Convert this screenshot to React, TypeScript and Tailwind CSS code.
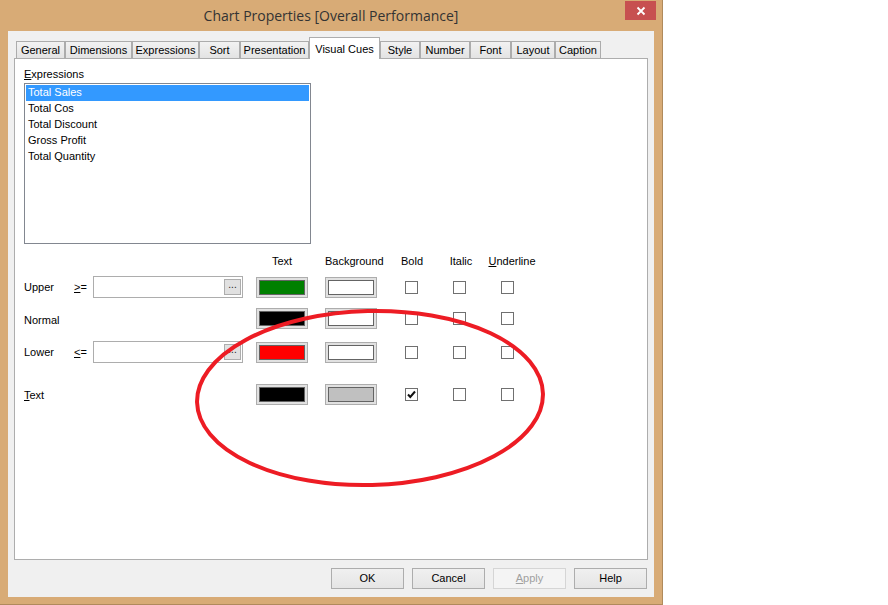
const tabs = [
  { label: 'General', w: 'w-[49px]' },
  { label: 'Dimensions', w: 'w-[67px]' },
  { label: 'Expressions', w: 'w-[67px]' },
  { label: 'Sort', w: 'w-[41px]' },
  { label: 'Presentation', w: 'w-[69px]' },
  { label: 'Visual Cues', w: 'w-[71px]', active: true },
  { label: 'Style', w: 'w-[40px]' },
  { label: 'Number', w: 'w-[50px]' },
  { label: 'Font', w: 'w-[41px]' },
  { label: 'Layout', w: 'w-[44px]' },
  { label: 'Caption', w: 'w-[46px]' },
];

const expressions = ['Total Sales', 'Total Cos', 'Total Discount', 'Gross Profit', 'Total Quantity'];

function Swatch({ color }: { color: string }) {
  return (
    <div className="h-[21px] w-[52px] border border-[#adadad] bg-[#e1e1e1] p-[2px]">
      <div className={`h-full w-full border border-[#646464] ${color}`} />
    </div>
  );
}

function Check({ checked = false }: { checked?: boolean }) {
  return (
    <div className="flex h-[13px] w-[13px] items-center justify-center border border-[#707070] bg-white">
      {checked && (
        <svg width="11" height="11" viewBox="0 0 11 11">
          <path d="M2 5.5 L4.3 8 L9 2.5" fill="none" stroke="#111" strokeWidth="2" />
        </svg>
      )}
    </div>
  );
}

function ValueBox() {
  return (
    <div className="flex h-[22px] w-[150px] items-center justify-end border border-[#adadad] bg-white pr-[1px]">
      <div className="flex h-[16px] w-[17px] items-center justify-center border border-[#adadad] bg-[#e1e1e1] pb-[4px] text-[10px] leading-none text-[#222]">
        ...
      </div>
    </div>
  );
}

function CueRow({
  label,
  op,
  hasBox,
  textColor,
  bgColor,
  bold,
  className,
  labelClass,
}: {
  label: React.ReactNode;
  op?: React.ReactNode;
  hasBox?: boolean;
  textColor: string;
  bgColor: string;
  bold?: boolean;
  className?: string;
  labelClass?: string;
}) {
  return (
    <div className={`flex h-[22px] items-center ${className ?? ''}`}>
      <span className={`w-[50px] ${labelClass ?? ''}`}>{label}</span>
      <span className="w-[19px]">{op}</span>
      <div className="w-[150px]">{hasBox && <ValueBox />}</div>
      <div className="ml-[13px]">
        <Swatch color={textColor} />
      </div>
      <div className="ml-[17px]">
        <Swatch color={bgColor} />
      </div>
      <div className="ml-[28px]">
        <Check checked={bold} />
      </div>
      <div className="ml-[35px]">
        <Check />
      </div>
      <div className="ml-[35px]">
        <Check />
      </div>
    </div>
  );
}

function Btn({ children, disabled }: { children: React.ReactNode; disabled?: boolean }) {
  return (
    <button
      type="button"
      className={
        disabled
          ? 'h-[21px] w-[73px] border border-[#d5d5d5] bg-[#f4f4f4] text-[11px] text-[#a0a0a0]'
          : 'h-[21px] w-[73px] border border-[#adadad] bg-gradient-to-b from-[#f0f0f0] to-[#e5e5e5] text-[11px] text-black'
      }
    >
      {children}
    </button>
  );
}

export default function App() {
  return (
    <div className="relative h-[605px] w-[888px] bg-white font-['Liberation_Sans',Arial,sans-serif] text-[11px] text-black">
      <div className="flex h-[605px] w-[663px] flex-col border-r border-b border-[#b08a5c] bg-[#d8ab76]">
        <div className="relative flex h-[31px] items-center justify-center">
          <span className="pb-[1px] font-['Open_Sans',sans-serif] text-[14px] text-[#333]">
            Chart Properties [Overall Performance]
          </span>
          <div className="absolute top-[1px] right-[6px] flex h-[19px] w-[31px] items-center justify-center bg-[#c75050]">
            <svg width="10" height="10" viewBox="0 0 10 10">
              <path d="M1.5 1.5 L8.5 8.5 M8.5 1.5 L1.5 8.5" stroke="white" strokeWidth="1.8" />
            </svg>
          </div>
        </div>

        <div className="mx-[8px] mb-[7px] flex flex-1 flex-col bg-[#f0f0f0] pt-[6px]">
          <div className="ml-[8px] flex h-[21px] items-end">
            {tabs.map((t) =>
              t.active ? (
                <div
                  key={t.label}
                  className={`${t.w} relative z-10 -mb-px flex h-[22px] items-start justify-center border border-b-0 border-[#adadad] bg-white pt-[3px]`}
                >
                  {t.label}
                </div>
              ) : (
                <div
                  key={t.label}
                  className={`${t.w} flex h-[17px] items-center justify-center border border-b-0 border-[#acacac] bg-gradient-to-b from-[#f2f2f2] to-[#e3e3e3] pt-[1px]`}
                >
                  {t.label}
                </div>
              ),
            )}
          </div>

          <div className="ml-[6px] h-[502px] w-[634px] border border-[#adadad] bg-white pt-[8px] pl-[9px]">
            <div className="h-[14px] leading-[14px]">
              <span className="underline">E</span>xpressions
            </div>
            <div className="mt-[2px] h-[161px] w-[287px] border border-[#828790] p-[1px]">
              {expressions.map((e, i) => (
                <div
                  key={e}
                  className={`h-[16px] pl-[2px] leading-[15px] ${i === 0 ? 'bg-[#3399ff] text-white' : ''}`}
                >
                  {e}
                </div>
              ))}
            </div>

            <div className="mt-[10px] flex h-[14px] items-center leading-[14px]">
              <span className="ml-[232px] w-[52px] text-center">Text</span>
              <span className="ml-[17px] w-[54px] text-center">Background</span>
              <span className="ml-[18px] w-[30px] text-center">Bold</span>
              <span className="ml-[19px] w-[30px] text-center">Italic</span>
              <span className="ml-[11px] w-[50px] text-center">
                <span className="underline">U</span>nderline
              </span>
            </div>

            <CueRow
              className="mt-[8px]"
              label="Upper"
              op={<><span className="underline">&gt;</span>=</>}
              hasBox
              textColor="bg-[#008000]"
              bgColor="bg-white"
            />
            <CueRow
              className="mt-[9px]"
              labelClass="pt-[5px]"
              label="Normal"
              textColor="bg-black"
              bgColor="bg-white"
            />
            <CueRow
              className="mt-[12px]"
              label="Lower"
              op={<><span className="underline">&lt;</span>=</>}
              hasBox
              textColor="bg-[#ff0000]"
              bgColor="bg-white"
            />
            <CueRow
              className="mt-[20px]"
              labelClass="pt-[2px]"
              label={<><span className="underline">T</span>ext</>}
              textColor="bg-black"
              bgColor="bg-[#c0c0c0]"
              bold
            />
          </div>

          <div className="mt-[8px] mr-[7px] flex justify-end gap-[8px]">
            <Btn>OK</Btn>
            <Btn>Cancel</Btn>
            <Btn disabled>
              <span className="underline">A</span>pply
            </Btn>
            <Btn>Help</Btn>
          </div>
        </div>
      </div>

      <svg className="pointer-events-none absolute top-0 left-0" width="888" height="605">
        <ellipse
          cx="370"
          cy="398"
          rx="173"
          ry="87"
          transform="rotate(-1.5 370 398)"
          fill="none"
          stroke="#ed1c24"
          strokeWidth="4"
        />
      </svg>
    </div>
  );
}
